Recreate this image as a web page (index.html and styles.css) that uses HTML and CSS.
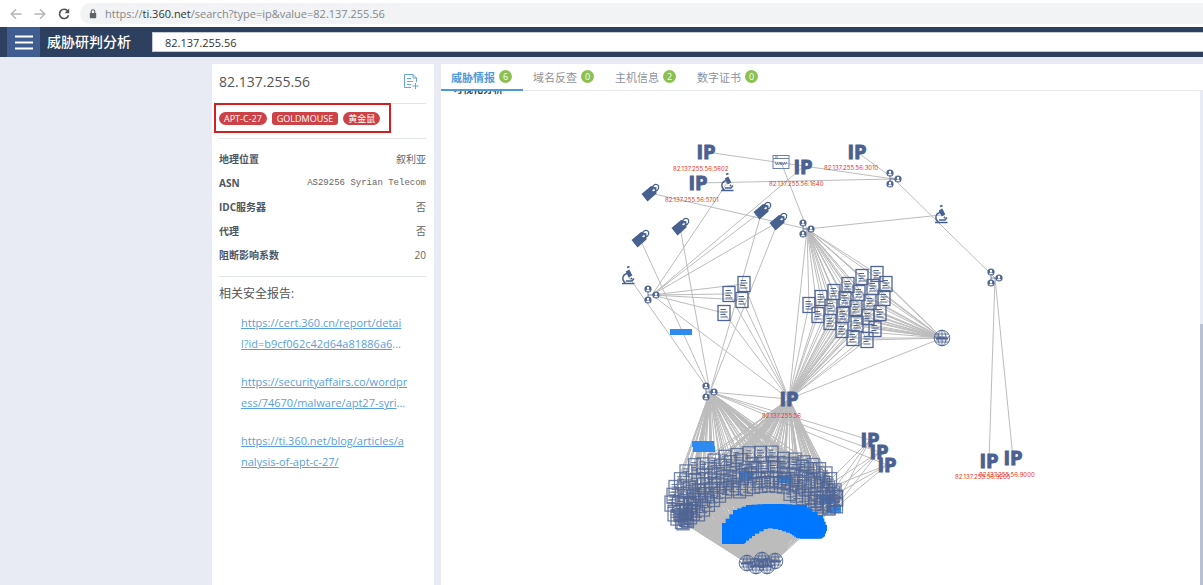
FILE: index.html
```html
<!DOCTYPE html>
<html lang="zh-CN">
<head>
<meta charset="utf-8">
<title>威胁研判分析</title>
<link rel="stylesheet" href="styles.css">
</head>
<body>
<div class="browser">
  <button class="nav-btn" aria-label="Back"><svg width="12" height="12" viewBox="0 0 12 12"><path d="M11.500 6H1.500M6 1.200L1.200 6L6 10.800" fill="none" stroke="#b4b6b8" stroke-width="1.400"/></svg></button>
  <button class="nav-btn" aria-label="Forward"><svg width="12" height="12" viewBox="0 0 12 12"><path d="M.5 6H10.500M6 1.200L10.800 6L6 10.800" fill="none" stroke="#b4b6b8" stroke-width="1.400"/></svg></button>
  <button class="nav-btn" aria-label="Reload"><svg width="12" height="12" viewBox="0 0 12 12"><path d="M9.800 3.200A4.600 4.600 0 1 0 10.500 7.200" fill="none" stroke="#4d5054" stroke-width="1.600"/><path d="M11.200 .6V5.200H6.600Z" fill="#4d5054"/></svg></button>
  <div class="omnibox">
    <svg width="8" height="10" viewBox="0 0 8 10"><rect x=".8" y="4" width="6.400" height="5.200" rx=".6" fill="#5f6368"/><path d="M2.200 4.200V2.600a1.800 1.800 0 0 1 3.600 0V4.200" fill="none" stroke="#5f6368" stroke-width="1.100"/></svg>
    <span class="url">https://<b>ti.360.net</b>/search?type=ip&amp;value=82.137.255.56</span>
  </div>
</div>
<header class="header">
  <button class="burger" aria-label="菜单"><svg width="18" height="15" viewBox="0 0 18 15"><path d="M0 1.500H18M0 7.500H18M0 13.500H18" stroke="#fff" stroke-width="2"/></svg></button>
  <h1 class="brand">威胁研判分析</h1>
  <input class="search" type="text" aria-label="搜索" value="82.137.255.56">
</header>
<main class="main">
  <aside class="side">
    <div class="side-head">
      <h2 class="side-title">82.137.255.56</h2>
      <button class="report-btn" aria-label="添加报告"><svg width="16" height="17" viewBox="0 0 16 17" fill="none" stroke="#62a8dc"><path d="M8 14.500H1.500V1.500H10L13.500 5V9M10 1.500V5H13.500"/><path d="M4 5.500H8M4 8.500H10M4 11.500H8M12.500 10V16M9.500 13H15.500"/></svg></button>
    </div>
    <div class="tags">
      <div class="tag-frame">
        <span class="tag">APT-C-27</span><span class="tag tag-square">GOLDMOUSE</span><span class="tag">黄金鼠</span>
      </div>
    </div>
    <dl class="facts">
      <div class="fact"><dt>地理位置</dt><dd>叙利亚</dd></div>
      <div class="fact"><dt>ASN</dt><dd class="mono">AS29256 Syrian Telecom</dd></div>
      <div class="fact"><dt>IDC服务器</dt><dd>否</dd></div>
      <div class="fact"><dt>代理</dt><dd>否</dd></div>
      <div class="fact"><dt>阻断影响系数</dt><dd>20</dd></div>
    </dl>
    <h3 class="reports-title">相关安全报告:</h3>
    <ul class="reports">
      <li><a href="#">https://cert.360.cn/report/detai<br>l?id=b9cf062c42d64a81886a6</a>...</li>
      <li><a href="#">https://securityaffairs.co/wordpr<br>ess/74670/malware/apt27-syri</a>...</li>
      <li><a href="#">https://ti.360.net/blog/articles/a<br>nalysis-of-apt-c-27/</a></li>
    </ul>
  </aside>
  <section class="content">
    <nav class="tabs">
      <button class="tab tab-active">威胁情报<span class="badge">6</span></button>
      <button class="tab">域名反查<span class="badge">0</span></button>
      <button class="tab">主机信息<span class="badge">2</span></button>
      <button class="tab">数字证书<span class="badge">0</span></button>
    </nav>
    <div class="scroller">
      <div class="view">
        <h2 class="view-title">可视化分析</h2>
        <svg class="graph" id="graph" role="img" aria-label="可视化分析">
          <defs>
            <g id="doc"><rect x="-6" y="-7.500" width="12" height="15" fill="none" stroke="#506594" stroke-width="1.300"/><path d="M-3.500 -3.500H2M-3.500 -1H3.500M-3.500 1.500H1.500M-3.500 4H3.500" stroke="#506594" stroke-width="1.100"/></g>
            <g id="person"><circle r="3.600" fill="#506594"/><circle cy="-1" r="1.200" fill="#fff"/><path d="M-1.900 2.300C-1.900 -.2 1.900 -.2 1.900 2.300Z" fill="#fff"/></g>
            <g id="org"><path d="M-4 -5V5M-4 0H4" stroke="#506594" stroke-width=".8"/><use href="#person" x="-4" y="-6"/><use href="#person" x="4" y="0"/><use href="#person" x="-4" y="5"/></g>
            <g id="tag"><path d="M-8.500 1L1 -7L6.500 -5.500L6.500 .5L-2.500 8.500Z" fill="#46608f"/><circle cx="3.500" cy="-3" r="1.300" fill="#fff"/><path d="M3 -3C1 -7 5 -9.500 7.500 -8.300C10 -6.500 8.500 -2.500 5.500 -2" fill="none" stroke="#46608f" stroke-width="1.200"/></g>
            <g id="scope" fill="none" stroke="#46608f"><path d="M-6 7.500H6.500" stroke-width="1.500"/><path d="M-1 -2.500C-6 -1 -6.500 4.500 -2.500 7M-2 5H4L6 2.500" stroke-width="1.400"/><path d="M-.5 -5.500L2.500 .5" stroke-width="4"/><path d="M-1 -8.500L1.500 -9.500M3 2L4 3" stroke-width="1.800"/></g>
            <g id="globe" fill="none" stroke="#506594" stroke-width=".9"><circle r="7.800"/><ellipse rx="4" ry="7.800"/><path d="M0 -7.800V7.800M-6.800 -4H6.800M-6.800 4H6.800"/><path d="M-6.500 -1.500L-5 1.500L-4 -1L-3 1.500L-2 -1.500M-1.800 -1.500L-1 1.500L0 -1L1 1.500L1.800 -1.500M2 -1.500L3 1.500L4 -1L5 1.500L6.500 -1.500" stroke-width="1.100"/></g>
            <g id="window" fill="none" stroke="#6e80a8"><rect x="-8" y="-6.500" width="16" height="13"/><path d="M-8 -3.500H8M-6 -5H-3"/><path d="M-6 0L-4.500 3L-3.500 .5L-2.500 3L-1 0L0 3L1 .5L2.500 3L3.500 0L4.500 2.500L6 0"/></g>
            <rect id="bar" x="-11" y="-3" width="22" height="6"/>
          </defs>
        </svg>
      </div>
      <div class="track"><div class="thumb"></div></div>
    </div>
  </section>
</main>
<script src="graph.js"></script>
</body>
</html>
```
FILE: styles.css
```css
* { box-sizing: border-box; }
body {
  margin: 0;
  height: 100vh;
  display: flex;
  flex-direction: column;
  overflow: hidden;
  background: #e8ebf3;
  color: #555;
  font-family: "Open Sans", "Noto Sans CJK SC", sans-serif;
  font-size: 11px;
}
h1, h2, h3, ul, dl, dd { margin: 0; padding: 0; }
button { border: 0; padding: 0; background: none; font: inherit; color: inherit; }

.browser {
  flex: none;
  display: flex;
  align-items: center;
  gap: 12px;
  height: 27px;
  padding-left: 10px;
  background: #fff;
}
.nav-btn { display: flex; }
.nav-btn svg { display: block; }
.omnibox {
  flex: 1;
  display: flex;
  align-items: center;
  gap: 8px;
  height: 21px;
  margin-left: -2px;
  padding-left: 9px;
  border-radius: 11px 0 0 11px;
  background: #f1f3f4;
}
.url { color: #85888c; font-size: 11px; }
.url b { color: #333; font-weight: 400; }

.header {
  flex: none;
  display: flex;
  align-items: center;
  height: 30px;
  padding-left: 7px;
  background: #2d405f;
}
.burger {
  display: flex;
  align-items: center;
  justify-content: center;
  align-self: stretch;
  width: 33px;
  background: #405d91;
}
.brand {
  width: 112px;
  padding-left: 7px;
  color: #fff;
  font-size: 14px;
  font-weight: 500;
  line-height: 20px;
}
.search {
  flex: 1;
  height: 20px;
  padding: 0 12px;
  border: 1px solid #c5cad4;
  border-right: 0;
  background: #fff;
  color: #333;
  font: inherit;
}

.main {
  flex: 1;
  display: flex;
  gap: 7px;
  min-height: 0;
  padding: 7px 0 0 212px;
}
.side {
  flex: none;
  width: 222px;
  padding: 0 8px 0 7px;
  background: #fff;
}
.side-head {
  display: flex;
  align-items: center;
  justify-content: space-between;
  height: 40px;
  padding: 0 7px 5px 0;
  border-bottom: 1px solid #e2e5ea;
}
.side-title { font-size: 14px; font-weight: 400; }
.report-btn svg { display: block; }
.tags {
  height: 36px;
  border-bottom: 1px solid #e2e5ea;
}
.tag-frame {
  display: flex;
  align-items: center;
  gap: 5px;
  width: 177px;
  height: 30px;
  margin: -1px 0 0 -5px;
  padding-left: 3px;
  border: 2px solid #d31f1f;
}
.tag {
  padding: 0 5px;
  border-radius: 7px;
  background: #cc4246;
  color: #fff;
  font-size: 9px;
  line-height: 13px;
}
.tag-square { border-radius: 3px; }

.facts {
  padding: 8px 0 9px;
  border-bottom: 1px solid #e2e5ea;
}
.fact {
  display: flex;
  justify-content: space-between;
  line-height: 24px;
  font-size: 10px;
}
.fact dt { color: #4f5560; font-weight: 700; }
.fact dd { color: #666; }
.fact .mono { font-family: "Liberation Mono", monospace; font-size: 9px; }
.reports-title {
  padding-top: 8px;
  font-size: 12px;
  font-weight: 400;
  line-height: 18px;
}
.reports { padding: 9px 0 0 22px; list-style: none; }
.reports li {
  margin-bottom: 17px;
  color: #5a9fdc;
  line-height: 21px;
  white-space: nowrap;
}
.reports a { color: #5a9fdc; text-decoration: underline; }

.content {
  flex: 1;
  display: flex;
  flex-direction: column;
  min-width: 0;
  background: #fff;
}
.tabs {
  flex: none;
  display: flex;
  height: 27px;
  border-bottom: 1px solid #e8eaee;
}
.tab {
  display: flex;
  align-items: center;
  gap: 4px;
  height: 27px;
  padding: 0 11px 0 10px;
  border-bottom: 2px solid transparent;
  color: #8c939c;
}
.tab-active { border-color: #4d9bdb; color: #4d9bdb; font-weight: 700; }
.badge {
  width: 13px;
  height: 13px;
  border-radius: 50%;
  background: #8cc152;
  color: #fff;
  font-size: 9px;
  font-weight: 400;
  line-height: 13px;
  text-align: center;
}
.scroller { flex: 1; display: flex; min-height: 0; }
.view {
  flex: 1;
  display: grid;
  min-width: 0;
  overflow: hidden;
}
.view-title {
  grid-area: 1 / 1;
  height: 14px;
  margin-top: -9px;
  padding-left: 12px;
  color: #444;
  font-size: 10px;
  line-height: 14px;
}
.graph { grid-area: 1 / 1; display: block; width: 100%; height: 100%; }
.track { width: 3px; padding-top: 233px; background: #e8ebf3; }
.thumb { height: 100%; background: #b9c1d1; }

.edge { stroke: #bcbcbc; stroke-width: 1; }
.bar { fill: #2f8af0; }
.bar-solid { fill: #0077ff; }
.doc-dense { opacity: .8; }
.ip {
  fill: #4b6191;
  stroke: #4b6191;
  stroke-width: 1px;
  font: 700 20px "Open Sans", sans-serif;
  text-anchor: middle;
}
.ip-label { fill: #e8352b; font: 6px Inter, sans-serif; }
```
FILE: graph.js
```js
const NS = "http://www.w3.org/2000/svg";
const graph = document.getElementById("graph");
const stage = document.createElementNS(NS, "g");
stage.setAttribute("transform", "translate(-441 -91)");
graph.appendChild(stage);

function add(name, attrs, text) {
  const el = document.createElementNS(NS, name);
  for (const key in attrs) el.setAttribute(key, attrs[key]);
  if (text) el.textContent = text;
  stage.appendChild(el);
}
function edge(a, b) {
  add("line", { class: "edge", x1: a[0], y1: a[1], x2: b[0], y2: b[1] });
}
function icon(id, list, cls) {
  list.forEach(p => add("use", { href: "#" + id, x: p[0], y: p[1], class: cls || id }));
}
const mix = (a, b, t) => [a[0] + (b[0] - a[0]) * t, a[1] + (b[1] - a[1]) * t];

// Fills the band between two polylines with evenly spaced points.
function band(outer, inner, steps, rows) {
  const points = [];
  for (let i = 0; i < outer.length - 1; i++) {
    for (let s = 0; s < steps; s++) {
      const o = mix(outer[i], outer[i + 1], s / steps);
      const n = mix(inner[i], inner[i + 1], s / steps);
      for (let r = 0; r < rows; r++) points.push(mix(o, n, r / (rows - 1)));
    }
  }
  return points;
}

const hubs = { left: [652, 295], mid: [807, 229], top: [894, 179], right: [995, 278], low: [710, 392] };
const root = [789, 399];
const web = [942, 338];
const globes = [[747, 563], [762, 560], [775, 561], [756, 566], [767, 566]];
const tags = [[650, 193], [640, 239], [680, 227], [762, 211], [778, 222]];
const scopes = [[727, 183], [628, 276], [941, 215]];
const ips = [[706, 152], [698, 183], [803, 167], [857, 152], [870, 440], [879, 452], [887, 465], [989, 461], [1013, 458]];
const fewDocs = [[744, 284], [729, 294], [742, 300], [724, 313]];
const docs = [[877, 274], [862, 277], [886, 284], [848, 285], [873, 287], [834, 292], [859, 293], [821, 298],
  [884, 298], [845, 299], [870, 302], [809, 305], [831, 307], [856, 308], [880, 313], [818, 315], [843, 315],
  [868, 317], [830, 322], [857, 324], [875, 329], [842, 330], [853, 338], [867, 340]];

// A small scatter keeps the dense band from forming a regular grid.
const arcDocs = band(
  [[680, 520], [674, 502], [678, 488], [689, 474], [706, 463], [728, 457], [752, 455], [775, 456], [798, 459], [816, 466], [829, 476], [838, 489], [841, 503]],
  [[686, 521], [692, 515], [702, 507], [712, 499], [724, 492], [738, 488], [752, 485], [767, 485], [782, 488], [795, 493], [807, 500], [820, 507], [835, 513]],
  2, 5).map((p, i) => [p[0] + (i * 7 % 5 - 2) * 1.5, p[1] + (i * 11 % 7 - 3) * 0.8]);
const arcBars = band(
  [[733, 541], [733, 526], [744, 513], [757, 508], [774, 507], [796, 508], [812, 518], [816, 528], [813, 536]],
  [[734, 540], [735, 540], [744, 533], [757, 526], [773, 524], [789, 527], [801, 531], [807, 535], [813, 536]],
  3, 5);

edge(ips[0], hubs.top);
edge(ips[1], hubs.top);
edge(ips[3], hubs.top);
edge(hubs.top, hubs.right);
edge(ips[2], hubs.left);
edge([781, 162], hubs.mid);
edge(tags[0], hubs.mid);
edge(scopes[2], hubs.mid);
edge(scopes[0], hubs.left);
edge(tags[3], hubs.left);
edge(tags[4], hubs.left);
tags.slice(1).forEach(t => edge(t, hubs.low));
edge(scopes[1], hubs.low);
edge(hubs.left, root);
edge(hubs.low, root);
edge(hubs.mid, root);
edge(web, root);
edge(hubs.right, ips[7]);
edge(hubs.right, ips[8]);
fewDocs.forEach(d => { edge(d, hubs.left); edge(d, root); });
docs.forEach(d => { edge(d, hubs.mid); edge(d, web); edge(d, root); });
[4, 5, 6].forEach(i => {
  edge(hubs.low, ips[i]);
  [[818, 492], [826, 500], [834, 509]].forEach(p => edge(ips[i], p));
});
arcDocs.forEach((d, i) => {
  edge(d, i % 3 ? hubs.low : root);
  if (i % 2) edge(d, root);
  globes.forEach(g => edge(d, g));
});

icon("bar", [[681, 332], [703, 444], [704, 449]]);
[[746, 475], [785, 479], [826, 500], [834, 509]].forEach(p =>
  add("rect", { class: "bar", x: p[0] - 7, y: p[1] - 4, width: 14, height: 8 }));
icon("doc", arcDocs, "doc-dense");
icon("bar", arcBars, "bar-solid");
icon("doc", fewDocs.concat(docs));
icon("globe", globes.concat([web]));
icon("tag", tags);
icon("scope", scopes);
icon("window", [[781, 162]]);
icon("org", Object.values(hubs));

ips.concat([root]).forEach(p => add("text", { class: "ip", x: p[0], y: p[1] + 7 }, "IP"));
[["82.137.255.56:5602", 673, 171], ["82.137.255.56:5701", 665, 202], ["82.137.255.56:1640", 769, 186],
  ["82.137.255.56:3010", 824, 170], ["82.137.255.56", 762, 418], ["82.137.255.56:9205", 955, 479],
  ["82.137.255.56:9000", 979, 477]].forEach(l => add("text", { class: "ip-label", x: l[1], y: l[2] }, l[0]));
```
